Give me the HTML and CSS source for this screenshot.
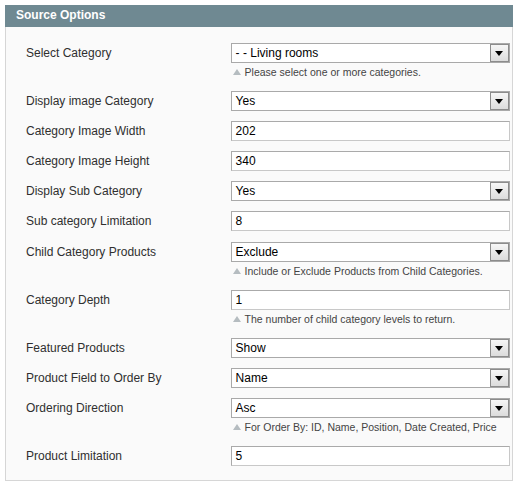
FILE: index.html
```html
<!DOCTYPE html>
<html lang="en">
<head>
    <meta charset="UTF-8">
    <title>Source Options</title>
    <link rel="stylesheet" href="styles.css">
</head>
<body>

    <!-- Fieldset header -->
    <div class="section">
        <div class="section-head">Source Options</div>

        <div class="section-body">
            <div class="row">
                <div class="label">Select Category</div>
                <div class="value">
                    <div class="select"><span class="text">- - Living rooms</span><span class="arrow"></span></div>
                    <p class="note">Please select one or more categories.</p>
                </div>
            </div>
            <div class="row">
                <div class="label">Display image Category</div>
                <div class="value">
                    <div class="select"><span class="text">Yes</span><span class="arrow"></span></div>
                </div>
            </div>
            <div class="row">
                <div class="label">Category Image Width</div>
                <div class="value"><div class="input">202</div></div>
            </div>
            <div class="row">
                <div class="label">Category Image Height</div>
                <div class="value"><div class="input">340</div></div>
            </div>
            <div class="row">
                <div class="label">Display Sub Category</div>
                <div class="value">
                    <div class="select"><span class="text">Yes</span><span class="arrow"></span></div>
                </div>
            </div>
            <div class="row">
                <div class="label">Sub category Limitation</div>
                <div class="value"><div class="input">8</div></div>
            </div>
            <div class="row">
                <div class="label">Child Category Products</div>
                <div class="value">
                    <div class="select"><span class="text">Exclude</span><span class="arrow"></span></div>
                    <p class="note">Include or Exclude Products from Child Categories.</p>
                </div>
            </div>
            <div class="row">
                <div class="label">Category Depth</div>
                <div class="value">
                    <div class="input">1</div>
                    <p class="note">The number of child category levels to return.</p>
                </div>
            </div>
            <div class="row">
                <div class="label">Featured Products</div>
                <div class="value">
                    <div class="select"><span class="text">Show</span><span class="arrow"></span></div>
                </div>
            </div>
            <div class="row">
                <div class="label">Product Field to Order By</div>
                <div class="value">
                    <div class="select"><span class="text">Name</span><span class="arrow"></span></div>
                </div>
            </div>
            <div class="row">
                <div class="label">Ordering Direction</div>
                <div class="value">
                    <div class="select"><span class="text">Asc</span><span class="arrow"></span></div>
                    <p class="note">For Order By: ID, Name, Position, Date Created, Price</p>
                </div>
            </div>
            <div class="row">
                <div class="label">Product Limitation</div>
                <div class="value"><div class="input">5</div></div>
            </div>
        </div>
    </div>

</body>
</html>
```

FILE: styles.css
```css
/* Base */
body {
    font-family: "Liberation Sans", Arial, sans-serif;
    font-size: 12px;
    color: #2f2f2f;
    background-color: #fff;
    margin: 0;
    padding: 5px 4px 0 5px;
}

/* Fieldset */
.section-head {
    height: 22px;
    line-height: 21px;
    background-color: #6f8992;
    color: #fff;
    font-weight: bold;
    padding-left: 11px;
}

.section-body {
    background-color: #fafafa;
    border: 1px solid #d6d6d6;
    border-top: none;
    padding: 11px 2px 9px 20px;
}

/* Rows */
.row {
    display: flex;
    padding: 5px 0 5.1px;
}

.label {
    width: 205px;
    height: 20px;
    line-height: 20px;
}

.value {
    width: 280px;
}

/* Controls */
.input,
.select {
    box-sizing: border-box;
    height: 20px;
    background-color: #fff;
    border: 1px solid;
    border-color: #aaa #c8c8c8 #c8c8c8 #aaa;
    font-size: 12px;
    line-height: 18px;
    color: #000;
}

.input {
    padding-left: 4px;
}

.select {
    display: flex;
    border-color: #a9a9a9;
}

.select .text {
    flex: 1;
    padding-left: 4px;
}

.select .arrow {
    position: relative;
    width: 17px;
    margin: 0;
    border: 1px solid #8c8c8c;
    background: linear-gradient(#f6f6f6, #dcdcdc);
}

.select .arrow::after {
    content: "";
    position: absolute;
    left: 4px;
    top: 6px;
    border-left: 4px solid transparent;
    border-right: 4px solid transparent;
    border-top: 5px solid #000;
}

/* Hints */
.note {
    margin: 2px 0 2px 2px;
    font-size: 10.5px;
    line-height: 14px;
    color: #444;
}

.note::before {
    content: "";
    display: inline-block;
    margin-right: 4px;
    vertical-align: 1px;
    border-left: 4px solid transparent;
    border-right: 4px solid transparent;
    border-bottom: 6px solid #b5bcc0;
}
```
